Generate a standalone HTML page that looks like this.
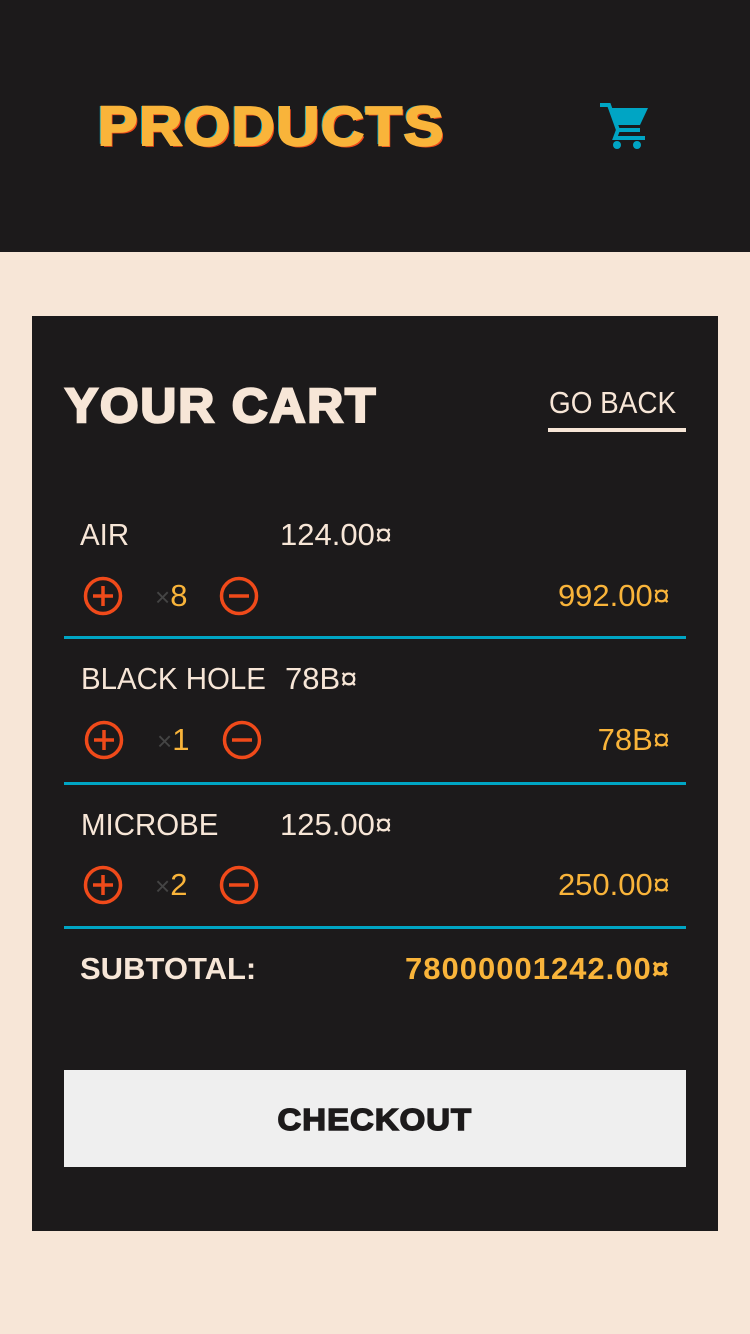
<!DOCTYPE html>
<html><head><meta charset="utf-8"><style>
*{margin:0;padding:0;box-sizing:border-box}
body{width:750px;height:1334px;background:#f7e6d7;position:relative;overflow:hidden;font-family:"Liberation Sans",sans-serif}
.a{position:absolute;line-height:1;white-space:nowrap}
.hdr{position:absolute;left:0;top:0;width:750px;height:252px;background:#1c1a1b}
.card{position:absolute;left:32px;top:316px;width:686px;height:915px;background:#1c1a1b}
.line{position:absolute;left:64px;width:622px;height:3px;background:#00a5c4}
.t{color:#f7e6d7;font-size:31px}
.o{color:#f9b43a;font-size:31px}
.x{color:#444;font-size:26px}
</style></head><body>
<div class="hdr"></div>
<div class="a" style="left:98px;top:99px;font-size:55px;font-weight:bold;letter-spacing:2px;color:#f9b43a;-webkit-text-stroke:2.5px #f9b43a;transform:scaleX(1.07);transform-origin:left;text-shadow:-2px -1px 0 #00a5c4,2px 2px 0 #f04a1a">PRODUCTS</div>
<svg class="a" style="left:598px;top:102px" width="52" height="48" viewBox="0 0 52 48"><path d="M2 3h9l9 25h22" fill="none" stroke="#00a5c4" stroke-width="4"/><path d="M11 6h39l-8 17H17z" fill="#00a5c4"/><path d="M20 28l-3 8h30" fill="none" stroke="#00a5c4" stroke-width="4"/><circle cx="19" cy="43" r="4" fill="#00a5c4"/><circle cx="39" cy="43" r="4" fill="#00a5c4"/></svg>
<div class="card"></div>
<div class="a" style="left:65px;top:383px;font-size:48px;font-weight:bold;letter-spacing:2px;color:#f7e6d7;-webkit-text-stroke:2.5px #f7e6d7;transform:scaleX(1.03);transform-origin:left">YOUR CART</div>
<div class="a t" style="left:549px;top:387px;transform:scaleX(0.9);transform-origin:left">GO BACK</div>
<div class="a" style="left:548px;top:428px;width:138px;height:4px;background:#f7e6d7"></div>

<div class="a t" style="left:80px;top:519px;transform:scaleX(.95);transform-origin:left">AIR</div>
<div class="a t" style="left:280px;top:519px">124.00¤</div>
<div class="a o" style="right:80px;top:580px">992.00¤</div>
<div class="a" style="left:155px;top:580px"><span class="x">×</span><span class="o">8</span></div>
<svg class="a" style="left:83px;top:576px" width="40" height="40"><circle cx="20" cy="20" r="17.5" fill="none" stroke="#f04a1a" stroke-width="3.5"/><path d="M10 20h20M20 10v20" stroke="#f04a1a" stroke-width="3.5"/></svg>
<svg class="a" style="left:219px;top:576px" width="40" height="40"><circle cx="20" cy="20" r="17.5" fill="none" stroke="#f04a1a" stroke-width="3.5"/><path d="M10 20h20" stroke="#f04a1a" stroke-width="3.5"/></svg>
<div class="line" style="top:636px"></div>

<div class="a t" style="left:81px;top:663px;transform:scaleX(.95);transform-origin:left">BLACK HOLE</div>
<div class="a t" style="left:285px;top:663px">78B¤</div>
<div class="a o" style="right:80px;top:724px">78B¤</div>
<div class="a" style="left:157px;top:724px"><span class="x">×</span><span class="o">1</span></div>
<svg class="a" style="left:84px;top:720px" width="40" height="40"><circle cx="20" cy="20" r="17.5" fill="none" stroke="#f04a1a" stroke-width="3.5"/><path d="M10 20h20M20 10v20" stroke="#f04a1a" stroke-width="3.5"/></svg>
<svg class="a" style="left:222px;top:720px" width="40" height="40"><circle cx="20" cy="20" r="17.5" fill="none" stroke="#f04a1a" stroke-width="3.5"/><path d="M10 20h20" stroke="#f04a1a" stroke-width="3.5"/></svg>
<div class="line" style="top:782px"></div>

<div class="a t" style="left:81px;top:809px;transform:scaleX(.95);transform-origin:left">MICROBE</div>
<div class="a t" style="left:280px;top:809px">125.00¤</div>
<div class="a o" style="right:80px;top:869px">250.00¤</div>
<div class="a" style="left:155px;top:869px"><span class="x">×</span><span class="o">2</span></div>
<svg class="a" style="left:83px;top:865px" width="40" height="40"><circle cx="20" cy="20" r="17.5" fill="none" stroke="#f04a1a" stroke-width="3.5"/><path d="M10 20h20M20 10v20" stroke="#f04a1a" stroke-width="3.5"/></svg>
<svg class="a" style="left:219px;top:865px" width="40" height="40"><circle cx="20" cy="20" r="17.5" fill="none" stroke="#f04a1a" stroke-width="3.5"/><path d="M10 20h20" stroke="#f04a1a" stroke-width="3.5"/></svg>
<div class="line" style="top:926px"></div>

<div class="a" style="left:80px;top:953px;font-size:31px;font-weight:bold;color:#f7e6d7">SUBTOTAL:</div>
<div class="a" style="right:80px;top:953px;font-size:31px;font-weight:bold;letter-spacing:1px;color:#f9b43a">78000001242.00¤</div>

<div class="a" style="left:64px;top:1070px;width:622px;height:97px;background:#efefef"></div>
<div class="a" style="left:64px;top:1104px;width:622px;text-align:center;font-size:31px;font-weight:bold;color:#1c1a1b"><span style="display:inline-block;letter-spacing:1px;transform:scaleX(1.06);-webkit-text-stroke:1.5px #1c1a1b">CHECKOUT</span></div>
</body></html>
